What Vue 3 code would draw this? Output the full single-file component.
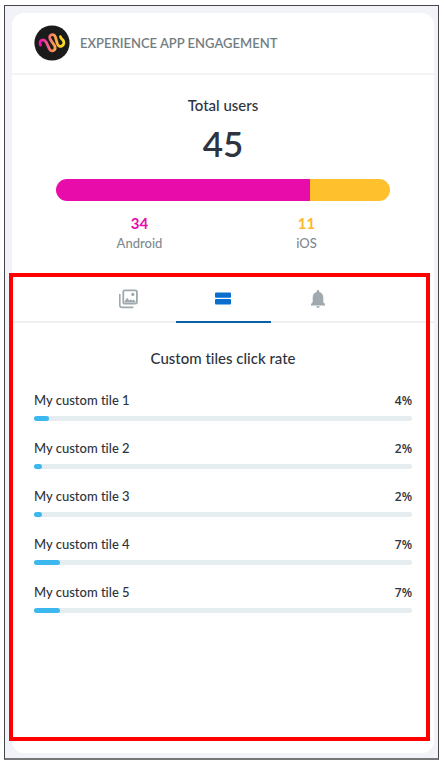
<script setup>
import { ref } from 'vue'

const platforms = [
  { name: 'Android', users: 34, key: 'android' },
  { name: 'iOS', users: 11, key: 'ios' }
]
const total = platforms.reduce((sum, p) => sum + p.users, 0)
const share = (users) => Math.round((users / total) * 100)

const tiles = [
  { name: 'My custom tile 1', rate: 4 },
  { name: 'My custom tile 2', rate: 2 },
  { name: 'My custom tile 3', rate: 2 },
  { name: 'My custom tile 4', rate: 7 },
  { name: 'My custom tile 5', rate: 7 }
]

const tabs = ['Images', 'Custom tiles', 'Notifications']
const active = ref('Custom tiles')
</script>

<template>
  <div class="page">
    <main class="frame">
      <article class="card">
        <header class="head">
          <svg class="logo" viewBox="0 0 36 36" aria-hidden="true">
            <defs>
              <linearGradient id="wave" gradientUnits="userSpaceOnUse" x1="5" y1="18" x2="31" y2="18">
                <stop offset="0" stop-color="#e80cae" />
                <stop offset="0.22" stop-color="#ee3c9c" />
                <stop offset="0.5" stop-color="#f98a5c" />
                <stop offset="0.78" stop-color="#fcc62c" />
                <stop offset="1" stop-color="#fde21c" />
              </linearGradient>
            </defs>
            <circle cx="18" cy="18" r="17.6" fill="#1c1b1c" />
            <path
              d="M6.4 20C5 17.4 6.6 15 8.8 14.8C10.4 14.8 11.4 15.8 12.2 17.2L15.2 23.6C16.2 25.8 18.2 26.4 19.8 25.4C21.4 24.4 21.4 22.6 20.6 20.8L16.4 14.6C15 12.2 15.6 10.4 17.4 9.8C19.2 9.4 20.6 10.2 21.4 12L23.2 18.4C24 21 25.8 22 27.8 21C30.2 19.8 30.4 17 29 15.2C28 14 26.6 13.4 26.4 11.6"
              fill="none" stroke="url(#wave)" stroke-width="2.8" stroke-linecap="round" stroke-linejoin="round" />
          </svg>
          <h1 class="title">EXPERIENCE APP ENGAGEMENT</h1>
        </header>

        <section class="summary">
          <h2 class="subtitle">Total users</h2>
          <p class="total">{{ total }}</p>
          <div class="split">
            <span
              v-for="p in platforms" :key="p.key" :class="['part', p.key]"
              :style="{ width: share(p.users) + '%' }"></span>
          </div>
          <dl class="legend">
            <div v-for="p in platforms" :key="p.key" class="entry">
              <dd :class="['count', p.key]">{{ p.users }}</dd>
              <dt class="name">{{ p.name }}</dt>
            </div>
          </dl>
        </section>

        <section class="details">
          <div class="tabs" role="tablist">
            <button
              v-for="tab in tabs" :key="tab" type="button" role="tab" class="tab"
              :class="{ active: tab === active }" :aria-selected="tab === active" :aria-label="tab"
              @click="active = tab">
              <svg v-if="tab === 'Images'" class="icon" viewBox="0 0 20 20">
                <path d="M1.8 5V16.4A2.2 2.2 0 0 0 4 18.4H15.4" fill="none" stroke="currentColor" stroke-width="1.6" />
                <rect x="5.3" y="1.3" width="13.6" height="13.4" rx="1.4" fill="none" stroke="currentColor" stroke-width="1.8" />
                <path d="M6.6 13.6V12.2L9.2 8.8L11.2 11.6L13 10.2L14.4 11.6L15.6 10.6L17.6 12.6V13.6Z" fill="currentColor" />
                <circle cx="14.8" cy="5.4" r="1.6" fill="currentColor" />
              </svg>
              <svg v-else-if="tab === 'Custom tiles'" class="icon" viewBox="0 0 20 20">
                <rect x="2" y="3.4" width="16" height="5.4" rx="1" fill="currentColor" />
                <rect x="2" y="10" width="16" height="5.4" rx="1" fill="currentColor" />
              </svg>
              <svg v-else class="icon" viewBox="0 0 20 20">
                <path
                  d="M10 1C9.2 1 8.7 1.6 8.7 2.4V3C6 3.6 4.7 6 4.7 8.6V13.2L3 15V16.4H17V15L15.3 13.2V8.6C15.3 6 14 3.6 11.3 3V2.4C11.3 1.6 10.8 1 10 1ZM8.3 17.2A1.7 1.7 0 0 0 11.7 17.2Z"
                  fill="currentColor" />
              </svg>
            </button>
          </div>
          <h2 class="subtitle rates-title">Custom tiles click rate</h2>
          <ul class="rates">
            <li v-for="tile in tiles" :key="tile.name" class="rate">
              <div class="row">
                <span>{{ tile.name }}</span>
                <span class="percent">{{ tile.rate }}%</span>
              </div>
              <div class="track">
                <div class="fill" :style="{ width: tile.rate + '%' }"></div>
              </div>
            </li>
          </ul>
        </section>
      </article>
    </main>
  </div>
</template>

<style>
body {
  margin: 0;
  background: #fff;
}
</style>

<style scoped>
* {
  box-sizing: border-box;
  margin: 0;
  padding: 0;
}

.page {
  display: flex;
  min-height: 100vh;
  padding: 5px 5px 5px 4px;
  font-family: Lato, "Liberation Sans", sans-serif;
  font-weight: 500;
  font-variant-ligatures: none;
  color: #2d3440;
}

.frame {
  flex: 1;
  display: flex;
  padding: 7px 4px 5px 7px;
  border: 1px solid #44444a;
  border-bottom: 2px solid #77777a;
  background: #f2f3f8;
}

.card {
  flex: 1;
  display: flex;
  flex-direction: column;
  padding-bottom: 12px;
  border-radius: 12px;
  background: #fff;
}

.head {
  display: flex;
  align-items: center;
  gap: 10px;
  height: 62px;
  padding: 0 22px;
  border-bottom: 2px solid #f3f4f5;
}

.logo {
  width: 36px;
  height: 36px;
}

.title {
  font-size: 13px;
  font-weight: 600;
  line-height: 20px;
  color: #727e83;
}

.summary {
  padding: 20px 44px;
  text-align: center;
}

.subtitle {
  font-size: 15px;
  font-weight: 500;
  line-height: 20px;
  text-align: center;
}

.total {
  margin-top: 8px;
  font-size: 35px;
  font-weight: 600;
  line-height: 40px;
}

.split {
  display: flex;
  height: 22px;
  margin-top: 16px;
  border-radius: 11px;
  overflow: hidden;
}

.part.android {
  background: #e80cab;
}

.part.ios {
  background: #ffc02e;
}

.legend {
  display: flex;
  margin-top: 12px;
}

.entry {
  flex: 1;
  display: flex;
  flex-direction: column;
}

.count {
  font-size: 15px;
  font-weight: 700;
  line-height: 20px;
}

.count.android {
  color: #e80cab;
}

.count.ios {
  color: #fbb92e;
}

.name {
  font-size: 13px;
  line-height: 20px;
  color: #7f8a90;
}

.details {
  position: relative;
  flex: 1;
}

/* Highlight outline drawn over the card's edge */
.details::after {
  content: "";
  position: absolute;
  inset: 0 4px 0 -3px;
  border: 4px solid #f00;
  pointer-events: none;
}

.tabs {
  display: flex;
  justify-content: center;
  height: 50px;
  border-bottom: 2px solid #eff0f2;
}

.tab {
  display: flex;
  align-items: center;
  justify-content: center;
  width: 95px;
  height: 50px;
  padding-top: 3px;
  border: 0;
  border-bottom: 2px solid transparent;
  background: none;
  color: #a0a9ae;
  cursor: pointer;
}

.tab.active {
  border-bottom-color: #0a5fa6;
  color: #0a6ed1;
}

.icon {
  width: 20px;
  height: 20px;
}

.rates-title {
  margin-top: 25px;
}

.rates {
  display: grid;
  gap: 17px;
  padding: 22px 22px 0;
  list-style: none;
}

.row {
  display: flex;
  align-items: baseline;
  justify-content: space-between;
  height: 20px;
  font-size: 13px;
  line-height: 20px;
}

.percent {
  font-family: "Open Sans", sans-serif;
  font-size: 12px;
  font-weight: 600;
}

.track {
  height: 5px;
  margin-top: 6px;
  border-radius: 3px;
  background: #e6edf0;
}

.fill {
  height: 5px;
  border-radius: 3px;
  background: #3db8ee;
}
</style>
